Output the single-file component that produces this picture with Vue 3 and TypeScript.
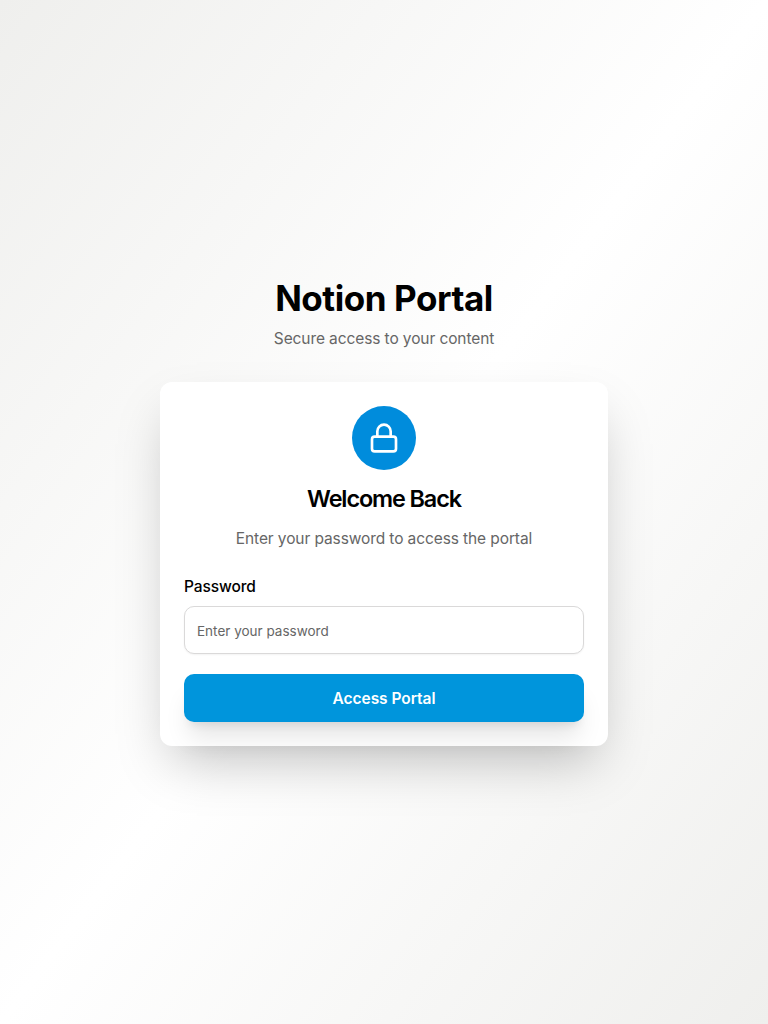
<script setup lang="ts">
import { ref } from 'vue'

const password = ref<string>('')
</script>

<template>
  <main class="page">
    <div class="column">
      <header class="intro">
        <h1>Notion Portal</h1>
        <p>Secure access to your content</p>
      </header>
      <section class="card">
        <div class="card-head">
          <div class="badge">
            <svg width="32" height="32" viewBox="0 0 24 24" fill="none" stroke="currentColor" stroke-width="2" stroke-linecap="round" stroke-linejoin="round">
              <rect x="3" y="11" width="18" height="11" rx="2" ry="2" />
              <path d="M7 11V7a5 5 0 0 1 10 0v4" />
            </svg>
          </div>
          <h2>Welcome Back</h2>
          <p>Enter your password to access the portal</p>
        </div>
        <form class="form" @submit.prevent>
          <div class="field">
            <label for="password">Password</label>
            <input id="password" v-model="password" type="password" placeholder="Enter your password" />
          </div>
          <button type="submit">Access Portal</button>
        </form>
      </section>
    </div>
  </main>
</template>

<style>
body {
  margin: 0;
}
</style>

<style scoped>
.page {
  box-sizing: border-box;
  min-height: 100vh;
  display: flex;
  align-items: center;
  justify-content: center;
  padding: 16px;
  background: linear-gradient(to bottom right, #efefed, #ffffff, #efefed);
  font-family: Inter, sans-serif;
  color: #000;
}
.column {
  width: 448px;
}
.intro {
  text-align: center;
  margin-bottom: 32px;
}
h1 {
  margin: 0 0 8px;
  font-size: 35px;
  line-height: 40px;
  font-weight: 700;
  letter-spacing: -0.45px;
}
p {
  margin: 0;
  padding-top: 2px;
  font-size: 15.5px;
  line-height: 22px;
  letter-spacing: -0.1px;
  color: #666;
}
.card {
  border-radius: 12px;
  background: #fff;
  box-shadow: 0 25px 50px -12px rgba(0, 0, 0, 0.25);
}
.card-head {
  display: flex;
  flex-direction: column;
  align-items: center;
  padding: 24px;
}
.badge {
  width: 64px;
  height: 64px;
  margin-bottom: 16px;
  display: flex;
  align-items: center;
  justify-content: center;
  border-radius: 50%;
  background: #008cdc;
  color: #fff;
}
h2 {
  margin: 0 0 15px;
  font-size: 23.4px;
  line-height: 25px;
  font-weight: 600;
  letter-spacing: -1.1px;
}
.form {
  padding: 0 24px 24px;
  display: flex;
  flex-direction: column;
  gap: 20px;
}
.field {
  display: flex;
  flex-direction: column;
  gap: 8px;
}
label {
  padding-top: 2px;
  font-size: 15.5px;
  line-height: 22px;
  font-weight: 500;
  letter-spacing: -0.1px;
}
input {
  box-sizing: border-box;
  width: 100%;
  height: 48px;
  padding: 10px 12px 8px;
  border: 1px solid #dad9d9;
  border-radius: 10px;
  background: #fff;
  box-shadow: 0 1px 2px rgba(0, 0, 0, 0.05);
  font: 400 13.5px/20px Inter, sans-serif;
  outline: none;
}
input::placeholder {
  color: #666;
  opacity: 1;
}
button {
  height: 48px;
  padding: 2px 0 0;
  border: 0;
  border-radius: 10px;
  background: #0095dc;
  color: #fff;
  font: 600 15.5px/24px Inter, sans-serif;
  letter-spacing: -0.05px;
  box-shadow: 0 20px 25px -5px rgba(0, 0, 0, 0.1), 0 8px 10px -6px rgba(0, 0, 0, 0.1);
}
</style>
